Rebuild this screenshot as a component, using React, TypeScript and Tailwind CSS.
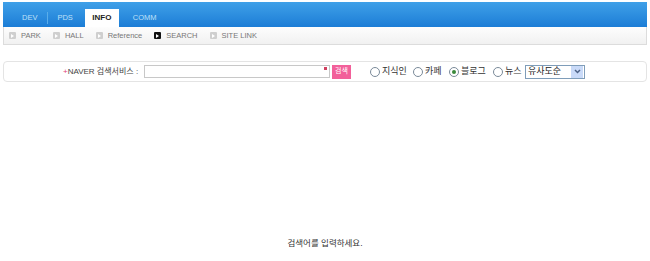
import React from "react";

function Bullet({ active }: { active?: boolean }) {
  return (
    <span
      className={
        "inline-flex items-center justify-center w-[7px] h-[7px] mr-[5px] rounded-[1px] " +
        (active ? "bg-[#111]" : "bg-[#cfcfcf]")
      }
    >
      <span className="w-0 h-0 border-y-[2px] border-y-transparent border-l-[3px] border-l-white" />
    </span>
  );
}

function Radio({ label, checked, w }: { label: string; checked?: boolean; w: string }) {
  return (
    <label className={"flex items-center " + w}>
      <span className="w-[10px] h-[10px] rounded-full border border-[#7a8a99] bg-white flex items-center justify-center mr-[2px]">
        {checked && <span className="w-[4px] h-[4px] rounded-full bg-[#3a8a3a]" />}
      </span>
      <span className="text-[9px] text-[#333]">{label}</span>
    </label>
  );
}

export default function App() {
  const subs = ["PARK", "HALL", "Reference", "SEARCH", "SITE LINK"];
  return (
    <div className="w-[650px] h-[261px] bg-white font-['Liberation_Sans','Noto_Sans_CJK_KR',sans-serif] flex flex-col">
      {/* Top nav */}
      <div className="mx-[3px] mt-[2px] h-[25px] bg-gradient-to-b from-[#3fa0e8] to-[#1b7dd6] flex items-end pl-[9px] text-[7.5px]">
        <div className="h-[18px] px-[10px] text-[#bfe0f8] flex items-center">DEV</div>
        <span className="w-px h-[12px] bg-[#5aaeea] mb-[3px]" />
        <div className="h-[18px] px-[9px] text-[#bfe0f8] flex items-center">PDS</div>
        <div className="ml-[3px] h-[18px] w-[34px] bg-white text-[#222] font-bold text-[8px] flex items-center justify-center">
          INFO
        </div>
        <div className="h-[18px] px-[14px] text-[#bfe0f8] flex items-center">COMM</div>
      </div>
      {/* Sub nav */}
      <div className="mx-[3px] h-[18px] bg-gradient-to-b from-[#fdfdfd] to-[#f1f1f1] border-x border-b border-[#dcdcdc] flex items-center pl-[5px]">
        {subs.map((s) => (
          <div key={s} className="flex items-center mr-[12px]">
            <Bullet active={s === "SEARCH"} />
            <span className="text-[7.5px] text-[#777]">{s}</span>
          </div>
        ))}
      </div>
      {/* Search box */}
      <div className="mx-[3px] mt-[16px] h-[21px] border border-[#e4e4e4] rounded-[4px] flex items-center pl-[59px]">
        <span className="text-[8px] text-[#444] w-[81px]">
          <span className="text-[#e0457a]">+</span>NAVER 검색서비스 :
        </span>
        <div className="relative w-[186px] h-[13px] border border-[#c8c8c8] bg-white">
          <span className="absolute right-[2px] top-[1px] w-[3px] h-[3px] bg-[#d04060]" />
        </div>
        <button className="ml-[2px] w-[19px] h-[14px] bg-[#f2609a] text-white text-[7px] flex items-center justify-center">
          검색
        </button>
        <div className="flex items-center ml-[19px]">
          <Radio label="지식인" w="w-[43px]" />
          <Radio label="카페" w="w-[36px]" />
          <Radio label="블로그" checked w="w-[44px]" />
          <Radio label="뉴스" w="w-[32px]" />
        </div>
        <div className="w-[60px] h-[14px] border border-[#7f9db9] bg-white flex items-center justify-between pl-[2px]">
          <span className="text-[9px] text-[#222] leading-none">유사도순</span>
          <span className="w-[12px] h-[12px] bg-[#c9daf8] mr-px flex items-center justify-center">
            <svg width="7" height="5" viewBox="0 0 7 5">
              <path d="M1 1 L3.5 3.5 L6 1" stroke="#4d6185" strokeWidth="1.5" fill="none" />
            </svg>
          </span>
        </div>
      </div>
      {/* Result */}
      <div className="flex-1 flex items-end justify-center pb-[11px]">
        <span className="text-[8.5px] text-[#333]">검색어를 입력하세요.</span>
      </div>
    </div>
  );
}
